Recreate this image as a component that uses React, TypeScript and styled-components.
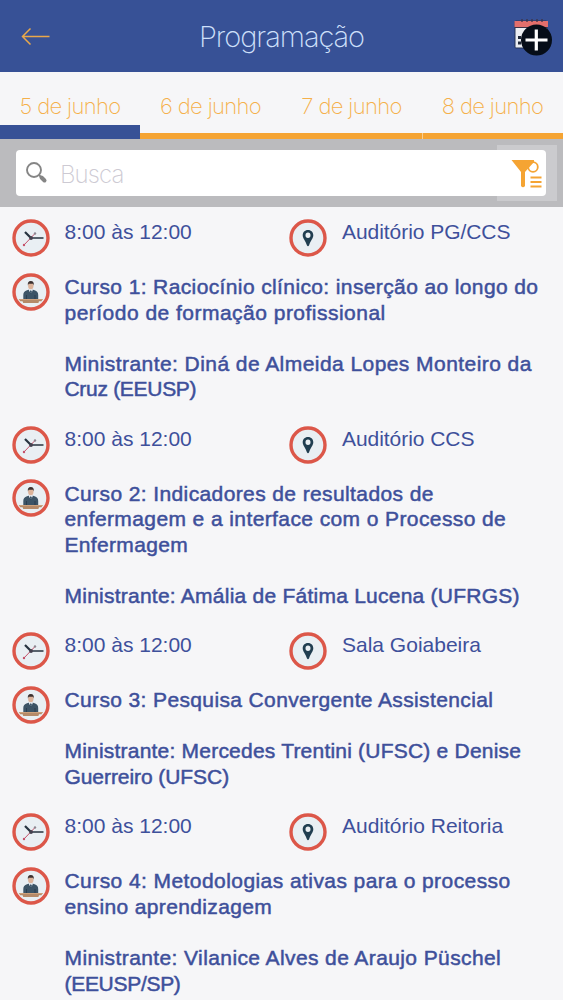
import React from "react";
import styled, { createGlobalStyle } from "styled-components";

const GlobalStyle = createGlobalStyle`
  * { box-sizing: border-box; }
  html, body { margin: 0; background: #f6f6f8; }
  body { font-family: "Liberation Sans", Arial, sans-serif; color: #3e509b; overflow: hidden; }
`;

const Screen = styled.main`
  width: 563px;
  height: 1000px;
  overflow: hidden;
  display: flex;
  flex-direction: column;
  background: #f6f6f8;
`;

const Header = styled.header`
  height: 72px;
  flex: none;
  display: grid;
  grid-template-columns: 60px 1fr 60px;
  align-items: center;
  background: #375196;
`;

const BackIcon = styled.svg`
  width: 30px;
  height: 20px;
  margin-left: 21px;
`;

const Title = styled.h1`
  margin: 2px 0 0;
  text-align: center;
  font-family: Inter, "Liberation Sans", sans-serif;
  font-size: 29px;
  font-weight: 200;
  letter-spacing: -1.05px;
  line-height: 40px;
  color: #cfe0fb;
`;

const AgendaIcon = styled.svg`
  width: 44px;
  height: 44px;
  margin: 4px 0 0 7px;
`;

const Tabs = styled.nav`
  height: 67px;
  flex: none;
  display: grid;
  grid-template-columns: 140px 141px 141px 141px;
`;

const Tab = styled.a<{ $active?: boolean }>`
  position: relative;
  padding-top: 19px;
  text-align: center;
  font-family: Inter, "Liberation Sans", sans-serif;
  font-size: 22px;
  font-weight: 200;
  letter-spacing: -0.65px;
  line-height: 30px;
  white-space: nowrap;
  color: #f5b04a;
  border-bottom: ${(p) => (p.$active ? "14px solid #375196" : "6px solid #f5a433")};

  & + & + &::before {
    content: "";
    position: absolute;
    left: 0;
    bottom: -6px;
    width: 1px;
    height: 6px;
    background: #f9cf93;
  }
`;

const SearchBar = styled.div`
  height: 68px;
  flex: none;
  padding: 6px 6px 6px 16px;
  display: flex;
  background: #bbbbbe;
`;

const SearchField = styled.div`
  flex: 1;
  height: 46px;
  margin-top: 5px;
  padding-left: 8px;
  display: flex;
  align-items: center;
  border-radius: 4px 0 0 4px;
  background: #fff;
`;

const SearchIcon = styled.svg`
  width: 26px;
  height: 26px;
`;

const Placeholder = styled.span`
  margin: 2px 0 0 10px;
  font-family: Inter, "Liberation Sans", sans-serif;
  font-size: 24px;
  font-weight: 200;
  letter-spacing: -0.9px;
  color: #cdcad3;
`;

const FilterButton = styled.div`
  width: 60px;
  height: 56px;
  padding: 5px 11px 5px 0;
  background: #cbcbce;
`;

const FilterFace = styled.div`
  height: 46px;
  padding: 8px 0 0 13px;
  border-radius: 0 4px 4px 0;
  background: #fff;
`;

const Session = styled.article<{ $lines: number }>`
  flex: none;
  padding: 12px 0 0 12px;
  height: ${(p) => 78.6 + p.$lines * 25.6}px;
`;

const MetaRow = styled.div`
  display: grid;
  grid-template-columns: 52.5px 224.5px 53px 1fr;
  height: 53.5px;
`;

const Meta = styled.span<{ $spacing?: number }>`
  font-size: 21px;
  line-height: 26px;
  letter-spacing: ${(p) => p.$spacing ?? 0}px;
  white-space: nowrap;
`;

const CourseRow = styled.div`
  display: grid;
  grid-template-columns: 52.5px 1fr;
`;

const Badge = styled.svg`
  width: 38px;
  height: 38px;
`;

const Copy = styled.div`
  padding-top: 1.5px;
`;

const Line = styled.div<{ $spacing?: number }>`
  height: 25.6px;
  line-height: 25.6px;
  font-size: 21px;
  letter-spacing: ${(p) => p.$spacing ?? 0}px;
  white-space: nowrap;
  -webkit-text-stroke: 0.5px currentColor;
`;

const Ring = () => <circle cx="19" cy="19" r="17" fill="#e9eff3" stroke="#dc5749" strokeWidth="3.4" />;

const ClockBadge = () => (
  <Badge viewBox="0 0 38 38">
    <Ring />
    <path d="M11 27 L23 14.5" stroke="#c4516a" strokeWidth="1" />
    <circle cx="12" cy="26" r="1.2" fill="#c4516a" />
    <circle cx="23" cy="14.5" r="1.2" fill="#8d8791" />
    <path d="M13 13 L19 19" stroke="#26333f" strokeWidth="2.2" />
    <path d="M18 19 H31.5" stroke="#26333f" strokeWidth="1.5" />
    <circle cx="19" cy="19" r="1.9" fill="#44414f" />
  </Badge>
);

const PinBadge = () => (
  <Badge viewBox="0 0 38 38">
    <Ring />
    <path
      fill="#203e50"
      fillRule="evenodd"
      d="M19 11 C15.7 11 13.7 13.3 13.7 16.2 C13.7 19.4 16.6 21.8 17.9 26.3 Q19 28.4 20.1 26.3 C21.4 21.8 24.3 19.4 24.3 16.2 C24.3 13.3 22.3 11 19 11 Z M19 13.5 A2.5 2.7 0 1 1 19 18.9 A2.5 2.7 0 1 1 19 13.5 Z"
    />
  </Badge>
);

const SpeakerBadge = () => (
  <Badge viewBox="0 0 38 38">
    <Ring />
    <path d="M11.3 27 V22 Q11.3 18.3 15 17.3 L18.8 16 L22.6 17.3 Q26.2 18.3 26.2 22 V27 Z" fill="#3c5466" />
    <path d="M16.6 15 H21 L20.5 18 L18.8 20 L17.1 18 Z" fill="#e5eaf0" />
    <path d="M18.8 17 L19.6 18.3 L18.8 21 L18 18.3 Z" fill="#29465b" />
    <ellipse cx="18.8" cy="12.7" rx="2.7" ry="3.6" fill="#dcb49b" />
    <path d="M15.9 12.5 Q15.2 8.2 18.8 8.1 Q22.4 8.2 21.7 12.5 L21 10.8 H16.6 Z" fill="#3b3130" />
    <path d="M14.5 22 V26 M23 22 V26" stroke="#26394a" strokeWidth="0.8" />
    <path d="M6.8 26 H30.8 L29.4 28.3 H27 L26.4 30 H11.2 L10.6 28.3 H8.2 Z" fill="#b58a68" />
    <path d="M6.8 26 H30.8 L30.3 27 H7.3 Z" fill="#cda17b" />
  </Badge>
);

type TextLine = { text: string; spacing?: number };
type SessionData = { room: string; roomSpacing?: number; lines: TextLine[] };

const sessions: SessionData[] = [
  {
    room: "Auditório PG/CCS",
    roomSpacing: -0.05,
    lines: [
      { text: "Curso 1: Raciocínio clínico: inserção ao longo do", spacing: 0.38 },
      { text: "período de formação profissional", spacing: 0.48 },
      { text: "" },
      { text: "Ministrante: Diná de Almeida Lopes Monteiro da", spacing: 0.44 },
      { text: "Cruz (EEUSP)", spacing: -0.3 },
    ],
  },
  {
    room: "Auditório CCS",
    roomSpacing: -0.05,
    lines: [
      { text: "Curso 2: Indicadores de resultados de", spacing: 0.39 },
      { text: "enfermagem e a interface com o Processo de", spacing: 0.4 },
      { text: "Enfermagem", spacing: 0.33 },
      { text: "" },
      { text: "Ministrante: Amália de Fátima Lucena (UFRGS)", spacing: 0.24 },
    ],
  },
  {
    room: "Sala Goiabeira",
    lines: [
      { text: "Curso 3: Pesquisa Convergente Assistencial", spacing: 0.37 },
      { text: "" },
      { text: "Ministrante: Mercedes Trentini (UFSC) e Denise", spacing: 0.21 },
      { text: "Guerreiro (UFSC)", spacing: -0.07 },
    ],
  },
  {
    room: "Auditório Reitoria",
    lines: [
      { text: "Curso 4: Metodologias ativas para o processo", spacing: 0.43 },
      { text: "ensino aprendizagem", spacing: 0.36 },
      { text: "" },
      { text: "Ministrante: Vilanice Alves de Araujo Püschel", spacing: 0.4 },
      { text: "(EEUSP/SP)", spacing: -0.3 },
    ],
  },
];

export default function App() {
  return (
    <>
      <GlobalStyle />
      <Screen>
        <Header>
          <BackIcon viewBox="0 0 30 20" fill="none" stroke="#e9a84a" strokeWidth="1.5">
            <path d="M1.5 10.5 H28.5 M9.5 2.5 L1.5 10.5 L9.5 18.5" />
          </BackIcon>
          <Title>Programação</Title>
          <AgendaIcon viewBox="0 0 44 44">
            <rect x="5" y="5" width="32" height="27" rx="1" fill="#eceef2" stroke="#273457" />
            <path d="M4.5 5 H38 V11 H4.5 Z" fill="#e36f6c" />
            <path d="M5 11.5 H37" stroke="#3d3347" strokeWidth="1" />
            <path d="M12 3 V6 M17 3 V6 M22 3 V6 M27 3 V6 M32 3 V6" stroke="#3d3347" strokeWidth="1.3" />
            <path d="M8 20 H11 V23 H8 Z M8 25.5 H11 V28.5 H8 Z" fill="#202838" />
            <circle cx="26.5" cy="24" r="15.5" fill="#060d18" />
            <path d="M15.5 24 H37.5 M26.3 13.5 V34.5" stroke="#fff" strokeWidth="3.2" />
          </AgendaIcon>
        </Header>
        <Tabs>
          <Tab $active>5 de junho</Tab>
          <Tab>6 de junho</Tab>
          <Tab>7 de junho</Tab>
          <Tab>8 de junho</Tab>
        </Tabs>
        <SearchBar>
          <SearchField>
            <SearchIcon viewBox="0 0 26 26" fill="none" stroke="#858585">
              <circle cx="10" cy="10" r="7" strokeWidth="1.9" />
              <path d="M15 15 L17.5 17.5" strokeWidth="1.8" />
              <path d="M17.5 17.5 L20.5 20.5" strokeWidth="4" strokeLinecap="round" />
            </SearchIcon>
            <Placeholder>Busca</Placeholder>
          </SearchField>
          <FilterButton>
            <FilterFace>
              <svg width="34" height="32" viewBox="0 0 34 32">
                <circle cx="23" cy="9" r="4.8" fill="#fff" stroke="#f5a433" strokeWidth="1.8" />
                <path d="M1.5 2 H24 V4 L15 14 V28 Q13 30.5 11 28 V14 Z" fill="#f5a433" />
                <path d="M20.5 19.5 H31.5 M20.5 24 H31.5 M20.5 28.5 H31.5" stroke="#f5a433" strokeWidth="1.8" />
              </svg>
            </FilterFace>
          </FilterButton>
        </SearchBar>
        {sessions.map((s) => (
          <Session key={s.room} $lines={s.lines.length}>
            <MetaRow>
              <ClockBadge />
              <Meta>8:00 às 12:00</Meta>
              <PinBadge />
              <Meta $spacing={s.roomSpacing}>{s.room}</Meta>
            </MetaRow>
            <CourseRow>
              <SpeakerBadge />
              <Copy>
                {s.lines.map((l, i) => (
                  <Line key={i} $spacing={l.spacing}>{l.text}</Line>
                ))}
              </Copy>
            </CourseRow>
          </Session>
        ))}
      </Screen>
    </>
  );
}
